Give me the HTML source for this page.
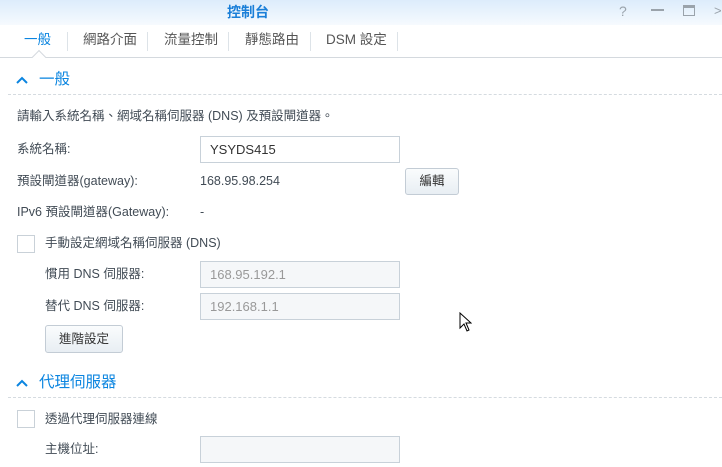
<!DOCTYPE html><html><head><meta charset="utf-8"><style>
body{margin:0;width:722px;height:467px;overflow:hidden;background:#fff;font-family:"Liberation Sans","Noto Sans CJK TC",sans-serif;font-size:12.5px;color:#414b55;position:relative}
.a{position:absolute;white-space:nowrap;line-height:16px}
.title{left:0;top:0;width:722px;height:25px;background:linear-gradient(#dcecfb,#f6fafe)}
.tabs{left:0;top:25px;width:722px;height:32px;background:#fff;border-bottom:1px solid #d4d9de}
.sep{position:absolute;top:7px;width:1px;height:19px;background:#dde3e8}
.tab{position:absolute;top:7px;font-size:13.5px;line-height:16px;color:#555}
.hd{font-size:15.5px;color:#0b85e0;line-height:18px}
.dash{left:8px;width:714px;border-top:1px dashed #d5dbe0}
.inp{position:absolute;left:200px;width:198px;height:25px;border:1px solid #c8d1d9;background:#fff;box-sizing:content-box}
.inp.d{background:#f5f7f9}
.inp span{position:absolute;left:9px;top:5px;font-size:13px;line-height:16px}
.btn{position:absolute;border:1px solid #c3ccd5;border-radius:3px;background:linear-gradient(#fafcfd,#e8eef3);text-align:center;font-size:12.5px;color:#333}
.cb{position:absolute;left:17px;width:16px;height:16px;border:1px solid #c9d1d8;background:#fff}
</style></head><body>
<div class="a title"></div>
<div class="a" style="left:227px;top:3px;font-size:14px;font-weight:bold;color:#1a7fd8;line-height:18px">控制台</div>
<div class="a" style="left:619px;top:3px;font-size:14px;color:#9aa3ab">?</div>
<div class="a" style="left:651px;top:9px;width:13px;height:2px;background:#9aa3ab"></div>
<div class="a" style="left:683px;top:5px;width:10px;height:7px;border:1px solid #9aa3ab;border-top-width:3px"></div>
<div class="a" style="left:714px;top:3px;font-size:13px;color:#9aa3ab">&gt;</div>
<div class="a tabs">
<div class="tab" style="left:24px;color:#0b85e0">一般</div>
<div class="sep" style="left:67px"></div>
<div class="tab" style="left:83px">網路介面</div>
<div class="sep" style="left:147px"></div>
<div class="tab" style="left:164px">流量控制</div>
<div class="sep" style="left:228px"></div>
<div class="tab" style="left:245px">靜態路由</div>
<div class="sep" style="left:310px"></div>
<div class="tab" style="left:326px">DSM 設定</div>
<div class="sep" style="left:397px"></div>
</div>
<div class="a" style="left:34px;top:52px;width:9px;height:9px;background:#fff;border-left:1px solid #d4d9de;border-top:1px solid #d4d9de;transform:rotate(45deg)"></div>
<svg class="a" style="left:16px;top:76px" width="12" height="8"><path d="M1 7 L6 2 L11 7" fill="none" stroke="#0b85e0" stroke-width="2"/></svg>
<div class="a hd" style="left:39px;top:71px">一般</div>
<div class="a dash" style="top:94px"></div>
<div class="a" style="left:17px;top:108px">請輸入系統名稱、網域名稱伺服器 (DNS) 及預設閘道器。</div>
<div class="a" style="left:17px;top:141px">系統名稱:</div>
<div class="inp" style="top:136px"><span style="color:#333">YSYDS415</span></div>
<div class="a" style="left:17px;top:173px">預設閘道器(gateway):</div>
<div class="a" style="left:200px;top:173px">168.95.98.254</div>
<div class="btn" style="left:405px;top:168px;width:52px;height:25px;line-height:25px">編輯</div>
<div class="a" style="left:17px;top:204px">IPv6 預設閘道器(Gateway):</div>
<div class="a" style="left:200px;top:204px">-</div>
<div class="cb" style="top:235px"></div>
<div class="a" style="left:45px;top:235px">手動設定網域名稱伺服器 (DNS)</div>
<div class="a" style="left:45px;top:266px">慣用 DNS 伺服器:</div>
<div class="inp d" style="top:261px"><span style="color:#999">168.95.192.1</span></div>
<div class="a" style="left:45px;top:298px">替代 DNS 伺服器:</div>
<div class="inp d" style="top:293px"><span style="color:#999">192.168.1.1</span></div>
<div class="btn" style="left:45px;top:325px;width:76px;height:26px;line-height:26px">進階設定</div>
<svg class="a" style="left:16px;top:379px" width="12" height="8"><path d="M1 7 L6 2 L11 7" fill="none" stroke="#0b85e0" stroke-width="2"/></svg>
<div class="a hd" style="left:39px;top:374px">代理伺服器</div>
<div class="a dash" style="top:397px"></div>
<div class="cb" style="top:410px"></div>
<div class="a" style="left:45px;top:411px">透過代理伺服器連線</div>
<div class="a" style="left:45px;top:441px">主機位址:</div>
<div class="inp d" style="top:436px"></div>
<svg class="a" style="left:459px;top:312px" width="13" height="20" viewBox="0 0 13 20"><path d="M1 1 L1 16 L5 12 L8 19 L10 18 L7 11 L12 11 Z" fill="#fff" stroke="#000" stroke-width="1"/></svg>
</body></html>
